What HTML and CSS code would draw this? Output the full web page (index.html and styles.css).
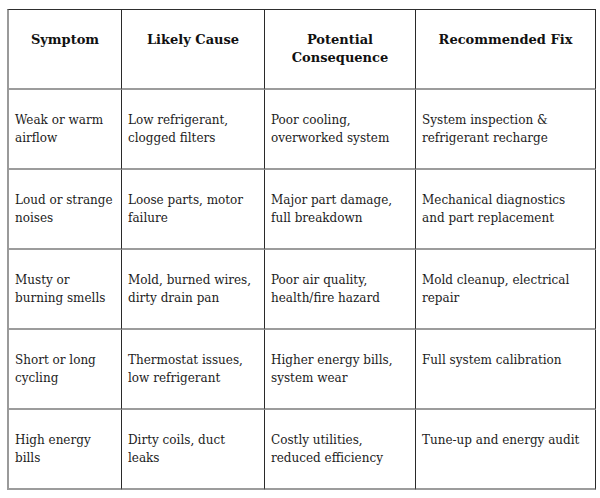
FILE: index.html
```html
<!DOCTYPE html>
<html lang="en">
<head>
<meta charset="utf-8">
<title>AC Symptoms</title>
<link rel="stylesheet" href="styles.css">
</head>
<body>
<div class="table">
  <div class="cell head">Symptom</div>
  <div class="cell head">Likely Cause</div>
  <div class="cell head">Potential<br>Consequence</div>
  <div class="cell head">Recommended Fix</div>

  <div class="cell">Weak or warm<br>airflow</div>
  <div class="cell">Low refrigerant,<br>clogged filters</div>
  <div class="cell">Poor cooling,<br>overworked system</div>
  <div class="cell">System inspection &amp;<br>refrigerant recharge</div>

  <div class="cell">Loud or strange<br>noises</div>
  <div class="cell">Loose parts, motor<br>failure</div>
  <div class="cell">Major part damage,<br>full breakdown</div>
  <div class="cell">Mechanical diagnostics<br>and part replacement</div>

  <div class="cell">Musty or<br>burning smells</div>
  <div class="cell">Mold, burned wires,<br>dirty drain pan</div>
  <div class="cell">Poor air quality,<br>health/fire hazard</div>
  <div class="cell">Mold cleanup, electrical<br>repair</div>

  <div class="cell">Short or long<br>cycling</div>
  <div class="cell">Thermostat issues,<br>low refrigerant</div>
  <div class="cell">Higher energy bills,<br>system wear</div>
  <div class="cell">Full system calibration</div>

  <div class="cell">High energy<br>bills</div>
  <div class="cell">Dirty coils, duct<br>leaks</div>
  <div class="cell">Costly utilities,<br>reduced efficiency</div>
  <div class="cell">Tune-up and energy audit</div>
</div>
</body>
</html>
```
FILE: styles.css
```css
html, body {
  margin: 0;
  padding: 0;
  background: #ffffff;
}
body {
  padding: 9px 0 0 7px;
  font-family: "DejaVu Serif", "Liberation Serif", serif;
  font-size: 12px;
  color: #1c1c1c;
}
.table {
  display: grid;
  grid-template-columns: 113px 143px 151px 180px;
  grid-auto-rows: 80px;
  width: max-content;
  border-top: 1px solid #2e2e2e;
  border-left: 2px solid #9a9a9a;
}
.cell {
  box-sizing: border-box;
  padding: 21px 6px 0 6px;
  line-height: 18px;
  white-space: nowrap;
  border-right: 1px solid #2a2a2a;
  border-bottom: 2px solid #9c9c9c;
}
.head {
  text-align: center;
  font-weight: bold;
  font-size: 13px;
  color: #111111;
}
```
